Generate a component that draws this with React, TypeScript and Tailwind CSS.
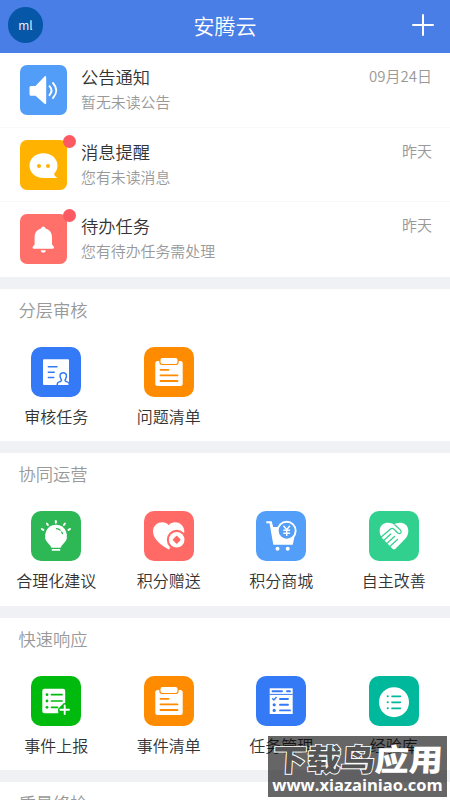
import React from 'react';

interface Notice {
    id: string;
    title: string;
    detail: string;
    time: string;
    color: string;
    unread: boolean;
    icon: React.ReactNode;
}

interface AppEntry {
    label: string;
    color: string;
    icon: React.ReactNode;
}

interface AppGroup {
    title: string;
    entries: AppEntry[];
}

const SpeakerIcon = () => (
    <svg viewBox="0 0 47 50" className="w-full h-full" fill="white">
        <path d="M11 21h4.5L24.5 11.4q1.700-1 1.700 1v25.400q0 2-1.700 1L15.500 30.700H11q-1.500 0-1.500-1.500v-6.700q0-1.500 1.500-1.500z" />
        <path d="M29.500 21.200q4 4.300 0 9M33 18q6.600 7.500 0 15" fill="none" stroke="white" strokeWidth="1.900" strokeLinecap="round" />
    </svg>
);

const ChatIcon = () => (
    <svg viewBox="0 0 47 50" className="w-full h-full" fill="white">
        <path d="M23.500 13.300c8 0 14 5.400 14 12.300 0 3.600-1.400 6-3.500 8.400.6 1.800 1.700 2.800 3.700 4.100H23.500c-8 0-14-5.400-14-12.500s6-12.300 14-12.300z" />
        <circle cx="19" cy="26" r="2" fill="#ffb300" />
        <circle cx="28" cy="26" r="2" fill="#ffb300" />
    </svg>
);

const BellIcon = () => (
    <svg viewBox="0 0 47 50" className="w-full h-full" fill="white">
        <path d="M23.300 12.700c1.200 0 2 .7 2.200 1.700 4 1 6.500 4.400 6.500 8.600v7.500l1.700 2c.8 1 .3 2.200-1 2.200H13.900c-1.300 0-1.800-1.200-1-2.200l1.700-2V23c0-4.200 2.500-7.600 6.500-8.600.2-1 1-1.700 2.200-1.700z" />
        <path d="M20.700 36.200h5.200q-.3 2.500-2.600 2.500t-2.600-2.500z" />
    </svg>
);

const AuditIcon = () => (
    <svg viewBox="0 0 50 50" className="w-full h-full">
        <rect x="12" y="12.300" width="26" height="25.700" rx="1" fill="white" />
        <path d="M17.300 19.700H26M17.300 25.300h6M17.300 30.500h5.500" stroke="#347af6" strokeWidth="1.400" strokeLinecap="round" />
        <path d="M26.300 38v-1.200c0-1.500 1.800-1.800 3.500-2.600.8-.4.800-1.100.200-2-1.600-2.700-1.500-6.500 2.200-6.500s3.900 3.800 2.300 6.500c-.6.900-.6 1.600.2 2 1.700.8 3.500 1.100 3.500 2.600V38" fill="white" stroke="#347af6" strokeWidth="1.500" />
    </svg>
);

const ClipboardIcon = () => (
    <svg viewBox="0 0 50 50" className="w-full h-full">
        <rect x="11.300" y="14" width="27.400" height="25" rx="2.500" fill="white" />
        <rect x="15.900" y="10.300" width="18.200" height="7.200" rx="2.500" fill="white" stroke="#ff8c00" strokeWidth="1.200" />
        <path d="M16.500 22.800h8M16.500 28.400h17M16.500 34h17" stroke="#ff8c00" strokeWidth="1.800" strokeLinecap="round" />
    </svg>
);

const BulbIcon = () => (
    <svg viewBox="0 0 50 50" className="w-full h-full" fill="white">
        <path d="M25 13.800a11 11 0 0 1 7.200 19.200q-2 1.700-2.500 3.800h-9.400q-.5-2.100-2.500-3.800A11 11 0 0 1 25 13.800z" />
        <path d="M21.500 38.900h7" stroke="white" strokeWidth="1.700" strokeLinecap="round" />
        <path d="M10.800 18l1.500.9M15.900 12.500l1 1.500M24.800 10v1.800M33.900 12.500l-1 1.500M39 18l-1.500.9" stroke="white" strokeWidth="2" strokeLinecap="round" />
        <path d="M25.500 17.700q4.500.5 6 5" fill="none" stroke="#2db755" strokeWidth="1.300" strokeLinecap="round" strokeDasharray="4 2.500" />
    </svg>
);

const GiftHeartIcon = () => (
    <svg viewBox="0 0 50 50" className="w-full h-full">
        <path d="M24.700 14.200C20 8.500 9 11.500 9 20.500 9 28.500 18.500 35 24.700 38.500 31 35 40.300 28.500 40.300 20.500c0-9-11-12-15.600-6.300z" fill="white" />
        <circle cx="32.700" cy="28.700" r="9.900" fill="#ff6a66" />
        <path d="M26 35l2 4h-2.500z" fill="#ff6a66" />
        <circle cx="32.700" cy="28.700" r="7.800" fill="white" />
        <path d="M32.700 25.500l3.200 3.200-3.200 3.200-3.200-3.200z" fill="#ff6a66" stroke="#ff6a66" strokeWidth="1.500" strokeLinejoin="round" />
    </svg>
);

const CartIcon = () => (
    <svg viewBox="0 0 50 50" className="w-full h-full">
        <path d="M10.300 10.300h5.400l1.500 5.700h21.100l.7 7-2.200 10.800H17.300L13.500 12.300h-3.200z" fill="white" />
        <circle cx="30.700" cy="19.700" r="9.900" fill="white" />
        <circle cx="30.700" cy="19.700" r="8" fill="#529ef8" />
        <path d="M27.500 14.700l3.200 4 3.200-4M30.700 18.700v6.300M27.300 19.200h6.800M27.300 22.200h6.800" fill="none" stroke="white" strokeWidth="1.400" />
        <circle cx="21.500" cy="37.800" r="2" fill="white" />
        <circle cx="31.700" cy="37.800" r="2" fill="white" />
    </svg>
);

const HandshakeIcon = () => (
    <svg viewBox="0 0 50 50" className="w-full h-full">
        <path d="M25 13.700c-4.500-3.700-14.300-2.400-14.300 6.300 0 4.500 2.300 7 4.300 9l8.500 8.700q1.500 1.200 3 0L35 29c2-2 4.300-4.500 4.300-9C39.300 11.300 29.500 10 25 13.700z" fill="white" />
        <path d="M12 26.300l9.500-8.300q1.700-1.300 3.300 0l4 4q1.800 1.200 3-.2.900-1.400-.3-2.700L26 14" fill="none" stroke="#31d08f" strokeWidth="1.200" strokeLinecap="round" strokeLinejoin="round" />
        <path d="M14.500 29.700l7.300-6.700M17.500 32.700l8-7.200M20.500 35.700l8-7.200" fill="none" stroke="#31d08f" strokeWidth="1.200" strokeLinecap="round" />
    </svg>
);

const ReportIcon = () => (
    <svg viewBox="0 0 50 50" className="w-full h-full">
        <path d="M13.300 12.700h18.900q2 0 2 2v13q-6.900 1-7 9.600H13.300q-2 0-2-2V14.700q0-2 2-2z" fill="white" />
        <path d="M20.500 18.700h10.500M20.500 25h10.500M20.500 31.300h6" stroke="#00bb0d" strokeWidth="1.700" strokeLinecap="round" />
        <circle cx="16" cy="18.700" r="1.400" fill="#00bb0d" />
        <circle cx="16" cy="25" r="1.400" fill="#00bb0d" />
        <circle cx="16" cy="31.300" r="1.400" fill="#00bb0d" />
        <path d="M33.700 29.300v9M29.200 33.800h9" stroke="#00bb0d" strokeWidth="4.500" strokeLinecap="round" />
        <path d="M33.700 29.500v8.600M29.400 33.800H38" stroke="white" strokeWidth="1.900" strokeLinecap="round" />
    </svg>
);

const TaskIcon = () => (
    <svg viewBox="0 0 50 50" className="w-full h-full">
        <rect x="13.700" y="12.300" width="23" height="25.700" fill="white" />
        <path d="M13.700 18.400h23" stroke="#347af6" strokeWidth="1" />
        <path d="M16.500 15.300h9.500M31 15.300h3" stroke="#347af6" strokeWidth="1.900" strokeLinecap="round" />
        <path d="M24 23h8M24 28.800h8M24 34.400h10" stroke="#347af6" strokeWidth="1.900" strokeLinecap="round" />
        <path d="M16.200 22.300l1.700 1.700 2.600-3" fill="none" stroke="#347af6" strokeWidth="1.300" />
        <circle cx="18.200" cy="28.800" r="1.600" fill="#347af6" />
        <circle cx="18.200" cy="34.400" r="1.600" fill="#347af6" />
    </svg>
);

const LibraryIcon = () => (
    <svg viewBox="0 0 50 50" className="w-full h-full">
        <circle cx="25" cy="26.200" r="15" fill="white" />
        <path d="M23 20.300h8.300M23 26.300h8.300M23 32.300h8.300" stroke="#00b89c" strokeWidth="1.700" strokeLinecap="round" />
        <path d="M18.700 20.300h.1M18.700 26.300h.1M18.700 32.300h.1" stroke="#00b89c" strokeWidth="2" strokeLinecap="round" />
    </svg>
);

const notices: Notice[] = [
    { id: 'announce', title: '公告通知', detail: '暂无未读公告', time: '09月24日', color: 'bg-[#529df8]', unread: false, icon: <SpeakerIcon /> },
    { id: 'message', title: '消息提醒', detail: '您有未读消息', time: '昨天', color: 'bg-[#ffb300]', unread: true, icon: <ChatIcon /> },
    { id: 'todo', title: '待办任务', detail: '您有待办任务需处理', time: '昨天', color: 'bg-[#ff706b]', unread: true, icon: <BellIcon /> },
];

const groups: AppGroup[] = [
    {
        title: '分层审核',
        entries: [
            { label: '审核任务', color: 'bg-[#347af6]', icon: <AuditIcon /> },
            { label: '问题清单', color: 'bg-[#ff8c00]', icon: <ClipboardIcon /> },
        ],
    },
    {
        title: '协同运营',
        entries: [
            { label: '合理化建议', color: 'bg-[#2db755]', icon: <BulbIcon /> },
            { label: '积分赠送', color: 'bg-[#ff6a66]', icon: <GiftHeartIcon /> },
            { label: '积分商城', color: 'bg-[#529ef8]', icon: <CartIcon /> },
            { label: '自主改善', color: 'bg-[#31d08f]', icon: <HandshakeIcon /> },
        ],
    },
    {
        title: '快速响应',
        entries: [
            { label: '事件上报', color: 'bg-[#00bb0d]', icon: <ReportIcon /> },
            { label: '事件清单', color: 'bg-[#ff8c00]', icon: <ClipboardIcon /> },
            { label: '任务管理', color: 'bg-[#347af6]', icon: <TaskIcon /> },
            { label: '经验库', color: 'bg-[#00b89c]', icon: <LibraryIcon /> },
        ],
    },
    { title: '质量终检', entries: [] },
];

const NoticeRow: React.FC<{ notice: Notice }> = ({ notice }) => (
    <li className="flex h-[74.500px] pt-3 pl-5 pr-[18px] border-b border-[#f8f8f8] last:border-b-0">
        <div className={`relative w-[47px] h-[50px] rounded-[7px] shrink-0 ${notice.color}`}>
            {notice.icon}
            {notice.unread && <span className="absolute -top-[5px] -right-[9px] w-[13px] h-[13px] rounded-full bg-[#fc5a62]" />}
        </div>
        <div className="flex-1 ml-3.5">
            <h2 className="text-[17.300px] leading-[23px] text-[#333]">{notice.title}</h2>
            <p className="mt-[3px] text-[14.900px] leading-[22px] text-[#999]">{notice.detail}</p>
        </div>
        <time className="text-[15px] leading-[22px] text-[#999]">{notice.time}</time>
    </li>
);

const GroupSection: React.FC<{ group: AppGroup }> = ({ group }) => (
    <section className="h-[152.300px] shrink-0 bg-white">
        <h2 className="pt-2 pl-[18.500px] text-[17.300px] leading-[25px] text-[#999]">{group.title}</h2>
        <div className="grid grid-cols-4 mt-[25px]">
            {group.entries.map(entry => (
                <div key={entry.label} className="flex flex-col items-center">
                    <div className={`w-[50px] h-[50px] rounded-[10px] ${entry.color}`}>{entry.icon}</div>
                    <span className="mt-[7px] text-base leading-6 text-[#333]">{entry.label}</span>
                </div>
            ))}
        </div>
    </section>
);

const App: React.FC = () => {
    return (
        <div className="relative flex flex-col w-[450px] h-[800px] overflow-hidden bg-[#f0f1f5] font-['Noto_Sans_CJK_SC',sans-serif] font-[350]">
            <header className="grid grid-cols-3 items-center h-[53px] shrink-0 px-2 pb-[3px] bg-[#4a7ee7] text-white">
                <div className="flex items-center justify-center w-[35px] h-[36px] rounded-full bg-[#0757a8] text-xs leading-none">ml</div>
                <h1 className="text-center text-[21px] leading-none">安腾云</h1>
                <svg viewBox="0 0 22 22" className="justify-self-end mr-2 w-[22px] h-[22px]">
                    <path d="M11 1v20M1 11h20" stroke="white" strokeWidth="2" strokeLinecap="round" />
                </svg>
            </header>
            <ul className="shrink-0 bg-white">
                {notices.map(notice => <NoticeRow key={notice.id} notice={notice} />)}
            </ul>
            <main className="flex flex-col gap-3 pt-[12.500px]">
                {groups.map(group => <GroupSection key={group.title} group={group} />)}
            </main>
            <div className="absolute left-[268px] top-[736px] w-[179px] h-[61px] flex flex-col items-center bg-black/60 text-white whitespace-nowrap">
                <div className="mt-[3px] text-[34px] leading-[38px] font-black -skew-x-3 scale-y-90">
                    <span className="text-[#555] [-webkit-text-stroke:2px_white] [paint-order:stroke_fill]">下载鸟</span>
                    <span>应用</span>
                </div>
                <div className="font-['Open_Sans',sans-serif] font-bold text-[16.500px] leading-[16px]">www.xiazainiao.com</div>
            </div>
        </div>
    );
};

export default App;
